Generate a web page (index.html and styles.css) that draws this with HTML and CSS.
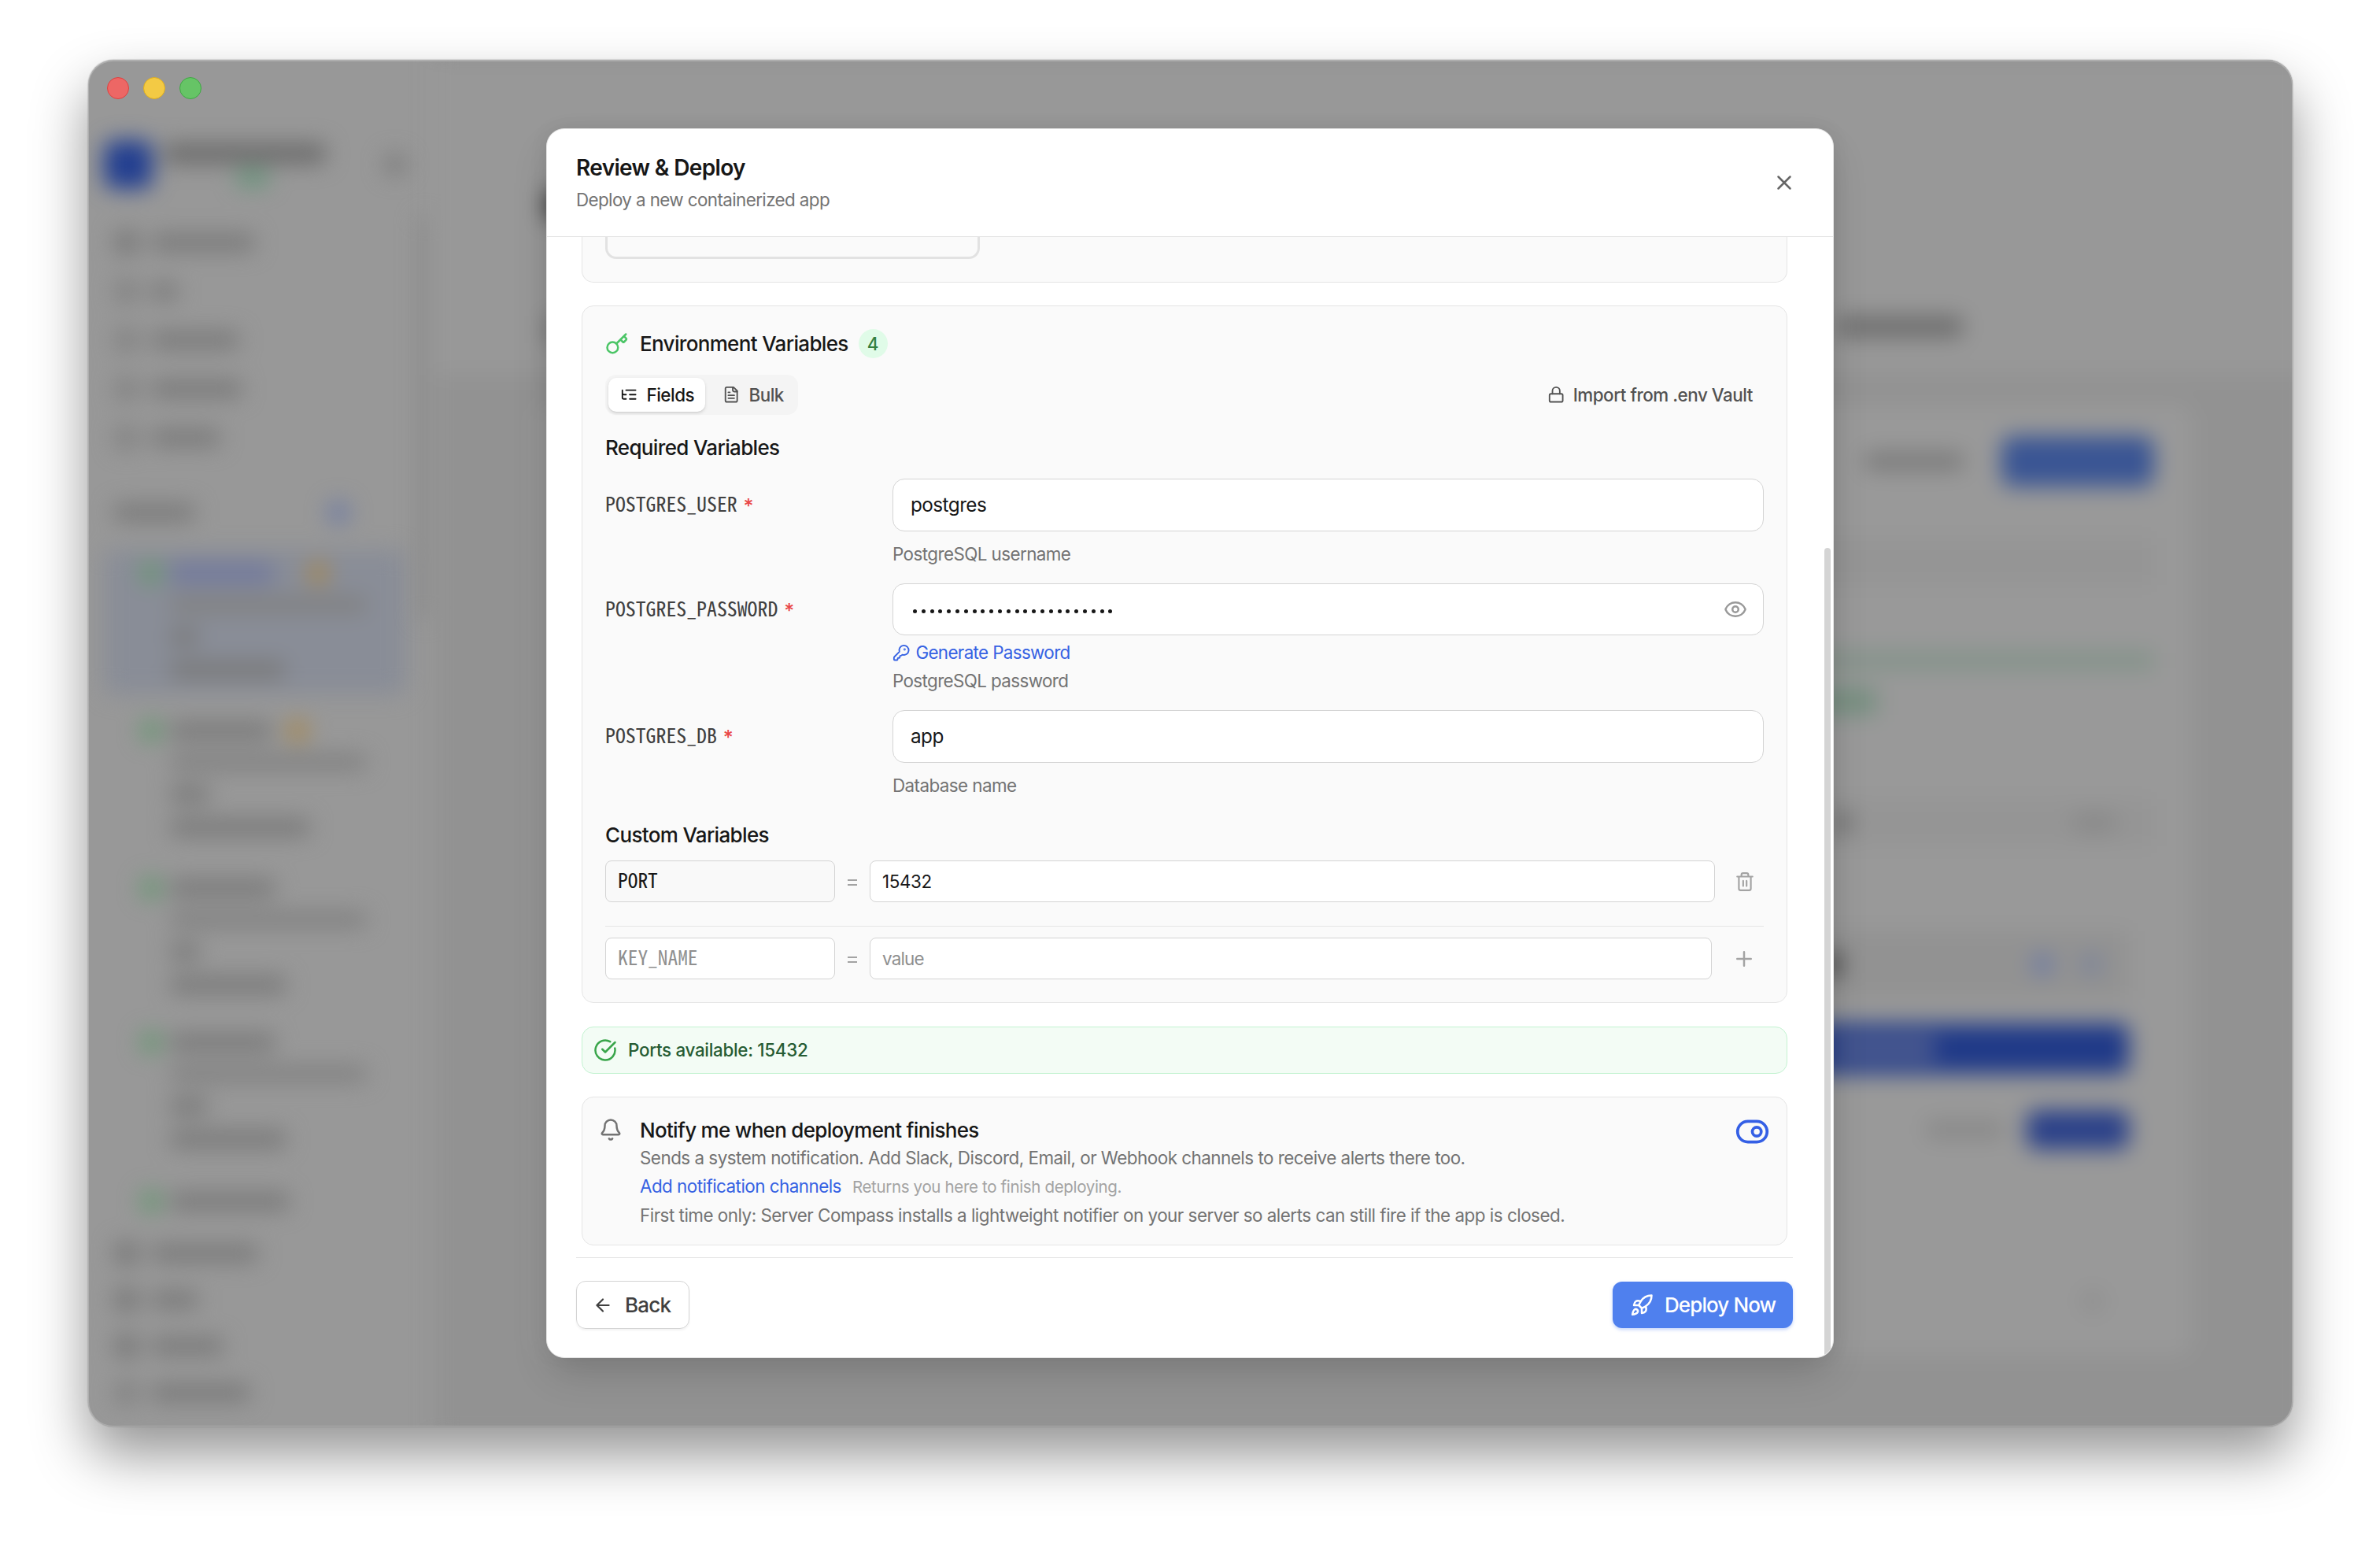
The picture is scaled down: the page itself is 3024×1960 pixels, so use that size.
FILE: index.html
```html
<!DOCTYPE html>
<html lang="en">
<head>
<meta charset="utf-8">
<title>Review &amp; Deploy</title>
<link rel="stylesheet" href="styles.css">
</head>
<body>
<div class="window">
  <div class="backdrop" aria-hidden="true">
    <aside class="side">
      <div class="side-top"><i class="logo"></i><div class="side-name"><i class="bar dark" style="width:206px"></i><i class="bar green" style="width:42px"></i></div><i class="dot grey"></i></div>
      <div class="nav">
        <div><i class="ico"></i><i class="bar" style="width:132px"></i></div>
        <div><i class="ico faint"></i><i class="bar" style="width:34px"></i></div>
        <div><i class="ico faint"></i><i class="bar" style="width:112px"></i></div>
        <div><i class="ico faint"></i><i class="bar" style="width:116px"></i></div>
        <div><i class="ico faint"></i><i class="bar" style="width:88px"></i></div>
      </div>
      <div class="side-head"><i class="bar" style="width:104px"></i><i class="dot blue"></i></div>
      <div class="server active"><div><i class="dot green"></i><i class="bar blue" style="width:132px"></i><i class="dot orange far"></i></div><i class="bar thin" style="width:250px"></i><i class="bar" style="width:36px"></i><i class="bar" style="width:146px"></i></div>
      <div class="server"><div><i class="dot green"></i><i class="bar" style="width:130px"></i><i class="dot orange"></i></div><i class="bar thin" style="width:250px"></i><i class="bar" style="width:50px"></i><i class="bar" style="width:178px"></i></div>
      <div class="server"><div><i class="dot green"></i><i class="bar" style="width:134px"></i></div><i class="bar thin" style="width:250px"></i><i class="bar" style="width:38px"></i><i class="bar" style="width:148px"></i></div>
      <div class="server"><div><i class="dot green"></i><i class="bar" style="width:134px"></i></div><i class="bar thin" style="width:250px"></i><i class="bar" style="width:48px"></i><i class="bar" style="width:148px"></i></div>
      <div class="server last"><div><i class="dot green"></i><i class="bar" style="width:152px"></i></div></div>
      <div class="nav low">
        <div><i class="ico"></i><i class="bar" style="width:136px"></i></div>
        <div><i class="ico"></i><i class="bar" style="width:60px"></i></div>
        <div><i class="ico"></i><i class="bar" style="width:92px"></i></div>
        <div><i class="ico faint"></i><i class="bar" style="width:126px"></i></div>
      </div>
    </aside>
    <div class="rail"><i></i></div>
    <main class="main">
      <div class="page-head"><div class="crumb"><i class="blob black"></i></div><div class="tabs-bg"><i class="blob"></i><i class="bar dark" style="width:160px"></i></div></div>
      <div class="panel">
        <div class="line actions"><i class="bar" style="width:126px"></i><i class="btn"></i></div>
        <div class="strip"></div>
        <div class="green-line"></div>
        <div class="green-tag"></div>
        <div class="line status"><i class="bar dark" style="width:20px"></i><i class="bar soft" style="width:56px"></i></div>
        <div class="sub"><i class="blob black"></i><span><i class="dot blue"></i><i class="dot blue soft"></i></span></div>
        <div class="navy"><i></i></div>
        <div class="line deploy"><i class="bar soft" style="width:100px"></i><i class="btn"></i></div>
        <div class="line foot"><i class="dot grey"></i></div>
      </div>
    </main>
  </div>

  <div class="lights"><i class="red"></i><i class="yellow"></i><i class="lime"></i></div>

  <section class="modal" role="dialog" aria-label="Review &amp; Deploy">
    <header class="modal-head">
      <div>
        <h1>Review &amp; Deploy</h1>
        <p>Deploy a new containerized app</p>
      </div>
      <svg class="i30 close" viewBox="0 0 24 24"><path d="M18 6 6 18M6 6l12 12"/></svg>
    </header>

    <div class="modal-body">
      <div class="card tail"><div class="option"></div></div>

      <div class="card env">
        <div class="env-title">
          <svg class="i30 key" viewBox="0 0 24 24"><path d="m15.500 7.500 2.300 2.300a1 1 0 0 0 1.400 0l2.100-2.100a1 1 0 0 0 0-1.400L19 4M21 2l-9.600 9.600"/><circle cx="7.500" cy="15.500" r="5.500"/></svg>
          <h2>Environment Variables</h2>
          <span class="count">4</span>
        </div>
        <div class="toolbar">
          <div class="switch">
            <button class="tab on"><svg class="i22" viewBox="0 0 24 24"><path d="M21 12h-8M21 6H8M21 18h-8M3 6v4c0 1.100.9 2 2 2h3M3 10v6c0 1.100.9 2 2 2h3"/></svg><span>Fields</span></button>
            <button class="tab"><svg class="i22" viewBox="0 0 24 24"><path d="M15 2H6a2 2 0 0 0-2 2v16a2 2 0 0 0 2 2h12a2 2 0 0 0 2-2V7Z"/><path d="M14 2v4a2 2 0 0 0 2 2h4M10 9H8M16 13H8M16 17H8"/></svg><span>Bulk</span></button>
          </div>
          <button class="vault"><svg class="i22" viewBox="0 0 24 24"><rect x="3" y="11" width="18" height="11" rx="2"/><path d="M7 11V7a5 5 0 0 1 10 0v4"/></svg><span>Import from .env Vault</span></button>
        </div>

        <h3 class="required-head">Required Variables</h3>
        <div class="field">
          <label>POSTGRES_USER <b>*</b></label>
          <div><div class="input">postgres</div><p class="help">PostgreSQL username</p></div>
        </div>
        <div class="field">
          <label>POSTGRES_PASSWORD <b>*</b></label>
          <div>
            <div class="input secret"><span class="dots"><i></i><i></i><i></i><i></i><i></i><i></i><i></i><i></i><i></i><i></i><i></i><i></i><i></i><i></i><i></i><i></i><i></i><i></i><i></i><i></i><i></i><i></i><i></i><i></i></span><svg class="i30" viewBox="0 0 24 24"><path d="M2.062 12.348a1 1 0 0 1 0-.696 10.750 10.750 0 0 1 19.876 0 1 1 0 0 1 0 .696 10.750 10.750 0 0 1-19.876 0"/><circle cx="12" cy="12" r="3"/></svg></div>
            <div class="generate"><svg class="i22" viewBox="0 0 24 24"><path d="M2.586 17.414A2 2 0 0 0 2 18.828V21a1 1 0 0 0 1 1h3a1 1 0 0 0 1-1v-1a1 1 0 0 1 1-1h1a1 1 0 0 0 1-1v-1a1 1 0 0 1 1-1h.172a2 2 0 0 0 1.414-.586l.814-.814a6.500 6.500 0 1 0-4-4z"/><circle cx="16.500" cy="7.500" r=".5"/></svg><span>Generate Password</span></div>
            <p class="help tight">PostgreSQL password</p>
          </div>
        </div>
        <div class="field">
          <label>POSTGRES_DB <b>*</b></label>
          <div><div class="input">app</div><p class="help">Database name</p></div>
        </div>

        <h3 class="custom-head">Custom Variables</h3>
        <div class="pair">
          <div class="small key-name locked">PORT</div><span class="eq"><i></i></span><div class="small val">15432</div>
          <svg class="i26" viewBox="0 0 24 24"><path d="M3 6h18M19 6v14a2 2 0 0 1-2 2H7a2 2 0 0 1-2-2V6M8 6V4a2 2 0 0 1 2-2h4a2 2 0 0 1 2 2v2M10 11v6M14 11v6"/></svg>
        </div>
        <div class="pair new">
          <div class="small key-name empty">KEY_NAME</div><span class="eq"><i></i></span><div class="small val empty">value</div>
          <svg class="i30" viewBox="0 0 24 24"><path d="M5 12h14M12 5v14"/></svg>
        </div>
      </div>

      <div class="alert"><svg class="i30" viewBox="0 0 24 24"><path d="M21.801 10A10 10 0 1 1 17 3.335"/><path d="m9 11 3 3L22 4"/></svg><span>Ports available: 15432</span></div>

      <div class="card notify">
        <svg class="i30 bell" viewBox="0 0 24 24"><path d="M10.268 21a2 2 0 0 0 3.464 0M3.262 15.326A1 1 0 0 0 4 17h16a1 1 0 0 0 .740-1.673C19.410 13.956 18 12.499 18 8A6 6 0 0 0 6 8c0 4.499-1.411 5.956-2.738 7.326"/></svg>
        <div class="notify-text">
          <h2>Notify me when deployment finishes</h2>
          <p>Sends a system notification. Add Slack, Discord, Email, or Webhook channels to receive alerts there too.</p>
          <p class="links"><a>Add notification channels</a><small>Returns you here to finish deploying.</small></p>
          <p class="first">First time only: Server Compass installs a lightweight notifier on your server so alerts can still fire if the app is closed.</p>
        </div>
        <svg class="toggle" viewBox="0 0 24 24"><rect x="2" y="5" width="20" height="14" rx="7"/><circle cx="15" cy="12" r="3"/></svg>
      </div>
    </div>

    <footer class="modal-foot">
      <button class="back"><svg class="i26" viewBox="0 0 24 24"><path d="m12 19-7-7 7-7M19 12H5"/></svg><span>Back</span></button>
      <button class="go"><svg class="i30" viewBox="0 0 24 24"><path d="M4.500 16.500c-1.500 1.260-2 5-2 5s3.740-.5 5-2c.710-.840.700-2.130-.090-2.910a2.180 2.180 0 0 0-2.910-.090zM12 15l-3-3a22 22 0 0 1 2-3.950A12.880 12.880 0 0 1 22 2c0 2.720-.780 7.500-6 11a22.350 22.350 0 0 1-4 2zM9 12H4s.550-3.030 2-4c1.620-1.080 5 0 5 0M12 15v5s3.030-.550 4-2c1.080-1.620 0-5 0-5"/></svg><span>Deploy Now</span></button>
    </footer>
    <div class="scrollbar"></div>
  </section>
</div>
</body>
</html>
```
FILE: styles.css
```css
* { box-sizing: border-box; margin: 0; padding: 0; }
body {
  width: 3024px; height: 1960px; overflow: hidden;
  padding: 76px 111px 0 112px;
  background: #fff; color: #171717;
  font-family: Inter, "Liberation Sans", sans-serif;
}
button { font: inherit; letter-spacing: inherit; border: 0; background: none; color: inherit; }
svg { display: block; flex: none; fill: none; stroke: currentColor; stroke-width: 2; stroke-linecap: round; stroke-linejoin: round; }
.i22 { width: 22.4px; height: 22.4px; }
.i26 { width: 26px; height: 26px; }
.i30 { width: 30px; height: 30px; }

.window {
  position: relative; height: 1736px; border-radius: 32px;
  background: #989898;
  box-shadow: 0 36px 70px rgba(0,0,0,.42), 0 0 1px 1px rgba(0,0,0,.12);
  padding: 87px 583px 0 582px;
}
.window::after {
  content: ""; position: absolute; inset: 0; border-radius: 32px;
  border: 1px solid rgba(255,255,255,.22); border-top-width: 2px; pointer-events: none;
}

/* blurred app behind the dialog */
.backdrop { position: absolute; inset: 0; overflow: hidden; border-radius: 32px; display: flex; }
.backdrop > * { filter: blur(14px); }
.backdrop i { display: block; flex: none; }
.bar { height: 22px; border-radius: 8px; background: #797979; }
.bar.thin { height: 20px; background: #808080; }
.bar.dark { background: #6c6c6c; height: 26px; }
.bar.soft { background: #888; }
.bar.blue { background: #737a9c; height: 28px; }
.bar.green { background: #66957a; height: 20px; }
.dot { width: 28px; height: 28px; border-radius: 14px; }
.dot.grey { background: #7c7c7c; }
.dot.blue { background: #6e7ba4; }
.dot.blue.soft { background: #7c849a; }
.dot.green { background: #699773; }
.dot.orange { background: #a68852; }
.ico { width: 30px; height: 30px; border-radius: 8px; background: #787878; }
.ico.faint { background: #828282; }

.side { width: 416px; padding: 104px 0 0 20px; }
.side-top { display: flex; height: 58px; align-items: center; }
.logo { width: 62px; height: 62px; border-radius: 14px; background: #233f90; }
.side-name { width: 294px; padding-left: 14px; display: flex; flex-direction: column; gap: 8px; }
.side-name .green { margin-left: 92px; }
.nav { display: flex; flex-direction: column; padding: 39px 0 0 14px; }
.nav > div { display: flex; align-items: center; gap: 16px; height: 62px; }
.nav.low { padding-top: 4px; }
.nav.low > div { height: 59px; }
.side-head { display: flex; align-items: center; justify-content: space-between; height: 50px; padding: 0 84px 0 12px; margin: 39px 0 22px; }
.server { height: 196px; padding: 36px 0 0 84px; display: flex; flex-direction: column; gap: 20px; }
.server > div { display: flex; align-items: center; gap: 10px; height: 20px; margin-left: -38px; }
.server .orange { margin-left: 8px; }
.server .orange.far { margin-left: 32px; }
.server.active { width: 384px; height: 184px; padding-top: 20px; background: #898d97; border-radius: 14px; }
.server.active + .server { height: 200px; }
.server:has(+ .last) { height: 202px; }
.server.last { height: 78px; }

.rail { width: 28px; padding-top: 200px; }
.rail i { width: 16px; height: 510px; margin-left: 4px; background: #8b8b8b; }
.main { flex: 1; background: #929292; margin: -20px -20px -20px -4px; padding-top: 20px; }
.page-head { height: 400px; background: #989898; padding: 168px 0 0 142px; }
.crumb { display: flex; gap: 20px; }
.blob { width: 40px; height: 34px; background: #777; }
.blob.black { background: #303030; }
.tabs-bg { display: flex; justify-content: space-between; width: 1800px; padding-top: 124px; }
.panel { margin: 38px 148px 0 130px; height: 1208px; background: #999; border-radius: 20px; display: flex; flex-direction: column; padding: 36px 48px 0 60px; }
.line { display: flex; justify-content: flex-end; align-items: center; }
.actions { height: 72px; gap: 42px; }
.actions .btn { width: 194px; height: 64px; border-radius: 14px; background: #3a5594; }
.actions .bar { margin-right: 6px; }
.strip { height: 60px; margin-top: 61px; background: #959595; }
.green-line { height: 24px; margin-top: 84px; background: #84938a; }
.green-tag { height: 34px; margin: 23px 352px 0 0; background: #768f80; }
.status { height: 60px; margin-top: 107px; background: #959595; gap: 282px; padding-right: 48px; }
.sub { height: 86px; margin: 107px 32px 0 0; background: #929292; display: flex; align-items: center; justify-content: flex-end; padding: 0 34px 0 0; }
.sub .blob { margin-right: 242px; width: 24px; height: 26px; background: #444; }
.sub span { display: flex; gap: 34px; }
.navy { height: 64px; margin: 32px 32px 0 0; border-radius: 12px; background: #203a88; display: flex; justify-content: flex-end; }
.navy i { width: 130px; height: 32px; margin: 16px 246px 0 0; background: #4c5b90; }
.deploy { height: 50px; margin: 46px 32px 0 0; gap: 28px; }
.deploy .btn { width: 130px; height: 50px; border-radius: 12px; background: #2b4189; }
.foot { height: 50px; margin-top: 168px; padding-right: 64px; }
.foot .dot { background: #8e8e8e; }

.lights { position: absolute; left: 24px; top: 22px; display: flex; gap: 18px; }
.lights i { width: 28px; height: 28px; border-radius: 50%; border: 1px solid; }
.lights .red { background: #ed6765; border-color: #dd4140; }
.lights .yellow { background: #f3ca44; border-color: #dfae1c; }
.lights .lime { background: #66c466; border-color: #3fa744; }

/* dialog */
.modal {
  position: relative; z-index: 1; width: 1636px; height: 1562px;
  display: flex; flex-direction: column; overflow: hidden;
  background: #fff; border: 1px solid #e5e5e5; border-radius: 23px;
  box-shadow: 0 24px 50px -6px rgba(0,0,0,.16), 0 0 24px rgba(0,0,0,.07);
}
.modal-head { height: 137px; flex: none; display: flex; justify-content: space-between; padding: 32px 47px 0 37px; border-bottom: 1px solid #e5e5e5; }
h1 { font-size: 28px; line-height: 34px; font-weight: 600; letter-spacing: -.65px; }
.modal-head p { margin-top: 9px; font-size: 22.4px; line-height: 30px; letter-spacing: -.6px; color: #737373; }
.close { margin-top: 21px; color: #666; }
.modal-body { height: 1296px; flex: none; padding: 0 58px 0 44px; }
.card { background: #fafafa; border: 1px solid #e5e5e5; border-radius: 15px; }
.tail { height: 58px; border-top: 0; border-radius: 0 0 15px 15px; padding-left: 29px; }
.option { width: 476px; height: 28px; border: 3px solid #e2e2e2; border-top: 0; border-radius: 0 0 14px 14px; }
.env { margin-top: 29px; height: 886px; padding: 29px 29px 0; }
.env-title { display: flex; align-items: center; height: 37px; }
.key { color: #4bc566; }
h2, h3 { font-size: 26px; line-height: 31px; font-weight: 500; letter-spacing: -.66px; }
.env-title h2 { margin-left: 14px; }
.count { width: 37px; height: 37px; margin-left: 13px; border-radius: 50%; background: #e0fbe8; color: #33803f; font-size: 22.4px; font-weight: 500; line-height: 37px; text-align: center; }
.toolbar { display: flex; justify-content: space-between; align-items: center; margin-top: 21px; font-size: 22.4px; font-weight: 500; letter-spacing: -.46px; color: #525252; }
.switch { display: flex; height: 51px; padding: 4px; width: 245px; border-radius: 14px; background: #f4f4f4; }
.tab { display: flex; align-items: center; height: 43px; padding-left: 15px; gap: 11px; width: 123px; border-radius: 10px; }
.tab.on { background: #fff; color: #171717; box-shadow: 0 2px 4px rgba(0,0,0,.12), 0 1px 2px rgba(0,0,0,.06); }
.tab.on + .tab { padding-left: 22px; width: 114px; }
.vault { display: flex; align-items: center; gap: 10px; margin-right: 14px; }
.required-head { margin-top: 26px; margin-bottom: 24px; }
.field { display: grid; grid-template-columns: 365px 1fr; margin-bottom: 22px; }
label { font: 25.8px/62px "Noto Sans Mono CJK SC", "Liberation Mono", monospace; height: 62px; color: #404040; white-space: pre; }
label b { font: 500 25px/40px Inter, sans-serif; color: #e94747; margin-left: -5px; vertical-align: -2px; }
.input { height: 67px; padding: 0 22px; border: 1px solid #d4d4d4; border-radius: 15px; background: #fff; font-size: 24.3px; line-height: 65px; letter-spacing: -.55px; }
.secret { height: 66px; display: flex; align-items: center; justify-content: space-between; padding-right: 20px; color: #999; }
.dots { display: flex; gap: 5.8px; padding: 4px 0 0 3px; }
.dots i { width: 5px; height: 5px; border-radius: 50%; background: #171717; }
.help { margin-top: 14px; font-size: 22.4px; line-height: 30px; letter-spacing: -.57px; color: #737373; }
.help.tight { margin-top: 6px; letter-spacing: -.62px; }
.generate { display: flex; align-items: center; gap: 7px; margin-top: 7px; height: 30px; font-size: 22.4px; line-height: 30px; letter-spacing: -.64px; color: #3662e3; }
.custom-head { margin-top: 32px; margin-bottom: 17px; }
.field:has(+ .custom-head) { margin-bottom: 0; }
.pair { display: flex; align-items: center; height: 53px; color: #a3a3a3; }
.small { height: 53px; padding-left: 16px; border: 1px solid #d4d4d4; border-radius: 8px; background: #fff; color: #171717; font-size: 22.4px; line-height: 51px; letter-spacing: -.4px; }
.key-name { width: 292px; padding-left: 15px; font: 25.4px/47px "Noto Sans Mono CJK SC", "Liberation Mono", monospace; letter-spacing: 0; }
.locked { background: #f9f9f9; }
.empty { color: #8f8f8f; }
.val.empty { letter-spacing: -.8px; }
.eq { width: 44px; display: flex; justify-content: center; }
.eq i { width: 12px; height: 8px; margin-top: 3px; border-top: 2px solid #a3a3a3; border-bottom: 2px solid #a3a3a3; }
.val { width: 1074px; padding-left: 15px; }
.pair svg { margin-left: 25px; }
.new { height: 68px; margin-top: 30px; padding-top: 14px; border-top: 1px solid #e5e5e5; }
.new .val { width: 1070px; }
.new svg { margin-left: 26px; }
.alert { display: flex; align-items: center; gap: 14px; height: 60px; margin-top: 30px; padding-left: 14px; border: 1px solid #c3f3d1; border-radius: 15px; background: #f3fcf5; color: #39a54a; }
.alert span { padding-bottom: 1px; color: #265c34; font-size: 22.4px; font-weight: 500; line-height: 30px; letter-spacing: -.3px; }
.notify { display: flex; height: 189px; margin-top: 29px; padding: 26px 21px 0 21px; }
.bell { color: #737373; }
.notify-text { flex: 1; margin-left: 22px; white-space: nowrap; }
.notify-text h2 { letter-spacing: -.7px; }
.notify-text p { font-size: 22.4px; line-height: 30px; letter-spacing: -.5px; color: #737373; margin-top: 5px; }
.notify-text .links { display: flex; align-items: baseline; gap: 14px; margin-top: 6px; letter-spacing: -.52px; }
.links a { color: #3662e3; }
.links small { font-size: 20.5px; letter-spacing: -.34px; color: #a3a3a3; }
.notify-text .first { margin-top: 6px; letter-spacing: -.49px; }
.toggle { width: 45px; height: 45px; margin-top: -5px; color: #345fe5; }

.modal-foot { display: flex; justify-content: space-between; height: 127px; margin: 0 51px 0 37px; padding-top: 29px; border-top: 1px solid #e5e5e5; font-size: 26px; font-weight: 500; }
.back { display: flex; align-items: center; gap: 15px; width: 144px; height: 61px; padding-left: 20px; border: 1px solid #d4d4d4; border-radius: 12px; color: #404040; letter-spacing: -.78px; box-shadow: 0 2px 3px rgba(0,0,0,.05); }
.go { display: flex; align-items: center; gap: 14px; width: 229px; height: 59px; margin-top: 1px; padding-left: 22px; border-radius: 12px; background: #4f80ee; color: #fff; letter-spacing: -.9px; white-space: nowrap; box-shadow: 0 2px 4px rgba(79,128,238,.35); }
.scrollbar { position: absolute; right: 3px; top: 532px; width: 8px; height: 1025px; border-radius: 4px 4px 0 0; background: #d4d4d4; }
```
